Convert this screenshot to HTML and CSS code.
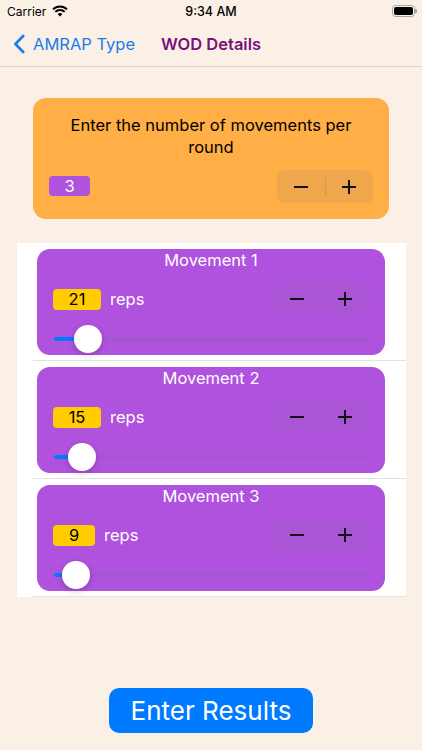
FILE: index.html
```html
<!DOCTYPE html>
<html>
<head>
<meta charset="UTF-8">
<title>WOD Details</title>
<link rel="stylesheet" href="styles.css">
</head>
<body>

<div class="status">
	<div class="carrier">
		<span>Carrier</span>
		<svg class="wifi" viewBox="0 0 16 12" width="16" height="12">
			<path d="M8 11.6 5.6 9.1a3.4 3.4 0 0 1 4.8 0z" fill="#000" />
			<path d="M3.3 6.9a6.7 6.7 0 0 1 9.4 0" fill="none" stroke="#000" stroke-width="1.9" />
			<path d="M1 4.4a10 10 0 0 1 14 0" fill="none" stroke="#000" stroke-width="1.9" />
		</svg>
	</div>
	<div class="time">9:34 AM</div>
	<div class="battery"><div class="battery-fill"></div></div>
</div>

<div class="nav">
	<svg class="chevron" viewBox="0 0 12 20" width="12" height="20">
		<path d="M10.2 2 2.4 10l7.8 8" fill="none" stroke="#1B7CE8" stroke-width="2.6" stroke-linecap="round" stroke-linejoin="round" />
	</svg>
	<span class="back">AMRAP Type</span>
	<span class="nav-title">WOD Details</span>
</div>

<div class="count-card">
	<p class="count-title">Enter the number of movements per round</p>
	<div class="count-row">
		<div class="count-value">3</div>
		<div class="stepper stepper-orange">
			<span class="step"><i class="minus"></i></span>
			<span class="step-divider"></span>
			<span class="step"><i class="minus"></i><i class="plus"></i></span>
		</div>
	</div>
</div>

<div class="list">
	<div class="row">
		<div class="move">
			<div class="move-title">Movement 1</div>
			<div class="reps-row">
				<div class="reps-value wide">21</div>
				<span class="reps">reps</span>
				<div class="stepper">
					<span class="step"><i class="minus"></i></span>
					<span class="step"><i class="minus"></i><i class="plus"></i></span>
				</div>
			</div>
			<div class="slider">
				<div class="slider-fill" style="width: 35px"></div>
				<div class="slider-thumb" style="left: 20px"></div>
			</div>
		</div>
	</div>
	<div class="row">
		<div class="move">
			<div class="move-title">Movement 2</div>
			<div class="reps-row">
				<div class="reps-value wide">15</div>
				<span class="reps">reps</span>
				<div class="stepper">
					<span class="step"><i class="minus"></i></span>
					<span class="step"><i class="minus"></i><i class="plus"></i></span>
				</div>
			</div>
			<div class="slider">
				<div class="slider-fill" style="width: 28px"></div>
				<div class="slider-thumb" style="left: 14px"></div>
			</div>
		</div>
	</div>
	<div class="row">
		<div class="move">
			<div class="move-title">Movement 3</div>
			<div class="reps-row">
				<div class="reps-value">9</div>
				<span class="reps">reps</span>
				<div class="stepper">
					<span class="step"><i class="minus"></i></span>
					<span class="step"><i class="minus"></i><i class="plus"></i></span>
				</div>
			</div>
			<div class="slider">
				<div class="slider-fill" style="width: 22px"></div>
				<div class="slider-thumb" style="left: 8px"></div>
			</div>
		</div>
	</div>
</div>

<div class="results">Enter Results</div>

</body>
</html>
```

FILE: styles.css
```css
* {
	box-sizing: border-box;
}
html, body {
	height: 100%;
	margin: 0;
	overflow: hidden;
}
body {
	background: #FAF0E6;
	color: #000;
	font-family: Inter, "Liberation Sans", sans-serif;
	font-size: 16.5px;
}
/* Status bar */
.status {
	align-items: center;
	display: flex;
	height: 22px;
	justify-content: space-between;
	padding: 0 6px 0 7px;
	position: relative;
}
.carrier {
	align-items: center;
	display: flex;
	font-size: 12px;
	gap: 6px;
}
.time {
	font-size: 12.5px;
	font-weight: 500;
	left: 0;
	position: absolute;
	right: 0;
	text-align: center;
}
.battery {
	border: 1px solid #A8A4A0;
	border-radius: 3.5px;
	height: 12px;
	margin-right: 1px;
	padding: 1px;
	position: relative;
	width: 23px;
}
.battery::after {
	background: #A8A4A0;
	border-radius: 0 1px 1px 0;
	content: "";
	height: 4px;
	position: absolute;
	right: -2.5px;
	top: 3px;
	width: 1.5px;
}
.battery-fill {
	background: #000;
	border-radius: 2px;
	height: 100%;
}
/* Navigation bar */
.nav {
	align-items: center;
	border-bottom: 1px solid #DDD6CE;
	display: flex;
	height: 45px;
	padding: 0 0 1px 13px;
}
.chevron {
	margin-right: 8px;
}
.back {
	color: #1B7CE8;
	width: 128px;
}
.nav-title {
	color: #7B107B;
	font-weight: 600;
}
/* Orange card on top */
.count-card {
	background: #FFAF45;
	border-radius: 13px;
	height: 121px;
	margin: 31px 33px 0;
	padding: 16px 16px 0;
}
.count-title {
	line-height: 22px;
	margin: 0;
	padding: 0 8px;
	text-align: center;
}
.count-row {
	align-items: center;
	display: flex;
	justify-content: space-between;
	margin-top: 12px;
}
.count-value {
	background: #AF52DE;
	border-radius: 4px;
	color: #FFF;
	height: 20px;
	line-height: 20px;
	margin-top: -1px;
	text-align: center;
	width: 41px;
}
/* Stepper */
.stepper {
	align-items: center;
	background: rgba(118, 118, 128, .08);
	border-radius: 8px;
	display: flex;
	height: 32px;
	width: 96px;
}
.stepper-orange {
	background: rgba(118, 118, 128, .12);
	height: 33px;
}
.step {
	flex: 1;
	height: 100%;
	position: relative;
}
.step-divider {
	background: rgba(60, 60, 67, .15);
	height: 18px;
	margin-right: -1px;
	width: 1px;
}
.minus, .plus {
	background: #111;
	height: 2px;
	left: 50%;
	margin: -1px 0 0 -7px;
	position: absolute;
	top: 50%;
	width: 14px;
}
.plus {
	height: 14px;
	margin: -7px 0 0 -1px;
	width: 2px;
}
.stepper-orange .minus, .stepper-orange .plus {
	top: 17px;
}
/* Movements list */
.list {
	background: #FFF;
	margin: 24px 16px 0 17px;
}
.row {
	height: 118px;
	padding: 6px 21px 0 20px;
	position: relative;
}
.row::after {
	background: #E4E2DF;
	bottom: 0;
	content: "";
	height: 1px;
	left: 16px;
	position: absolute;
	right: 0;
}
.move {
	background: #AF52DE;
	border-radius: 13px;
	color: #FFF;
	height: 106px;
	padding: 0 16px;
}
.move-title {
	height: 23px;
	line-height: 22px;
	text-align: center;
}
.reps-row {
	align-items: center;
	display: flex;
	margin-top: 11px;
}
.reps-value {
	background: #FFCC00;
	border-radius: 4px;
	color: #000;
	height: 21px;
	line-height: 21px;
	text-align: center;
	width: 42px;
}
.reps-value.wide {
	width: 48px;
}
.reps {
	margin-left: 9px;
}
.reps-row .stepper {
	margin-left: auto;
}
.slider {
	background: rgba(120, 100, 150, .18);
	border-radius: 2px;
	height: 4px;
	margin: 22px 0 0 1px;
	position: relative;
}
.slider-fill {
	background: #007AFF;
	border-radius: 2px;
	height: 100%;
}
.slider-thumb {
	background: #FFF;
	border-radius: 50%;
	box-shadow: 0 2px 6px rgba(0, 0, 0, .2);
	height: 28px;
	position: absolute;
	top: -12px;
	width: 28px;
}
/* Bottom button */
.results {
	background: #007AFF;
	border-radius: 10px;
	color: #FFF;
	font-size: 26px;
	height: 45px;
	line-height: 46px;
	margin: 91px auto 0;
	text-align: center;
	width: 204px;
}
```
